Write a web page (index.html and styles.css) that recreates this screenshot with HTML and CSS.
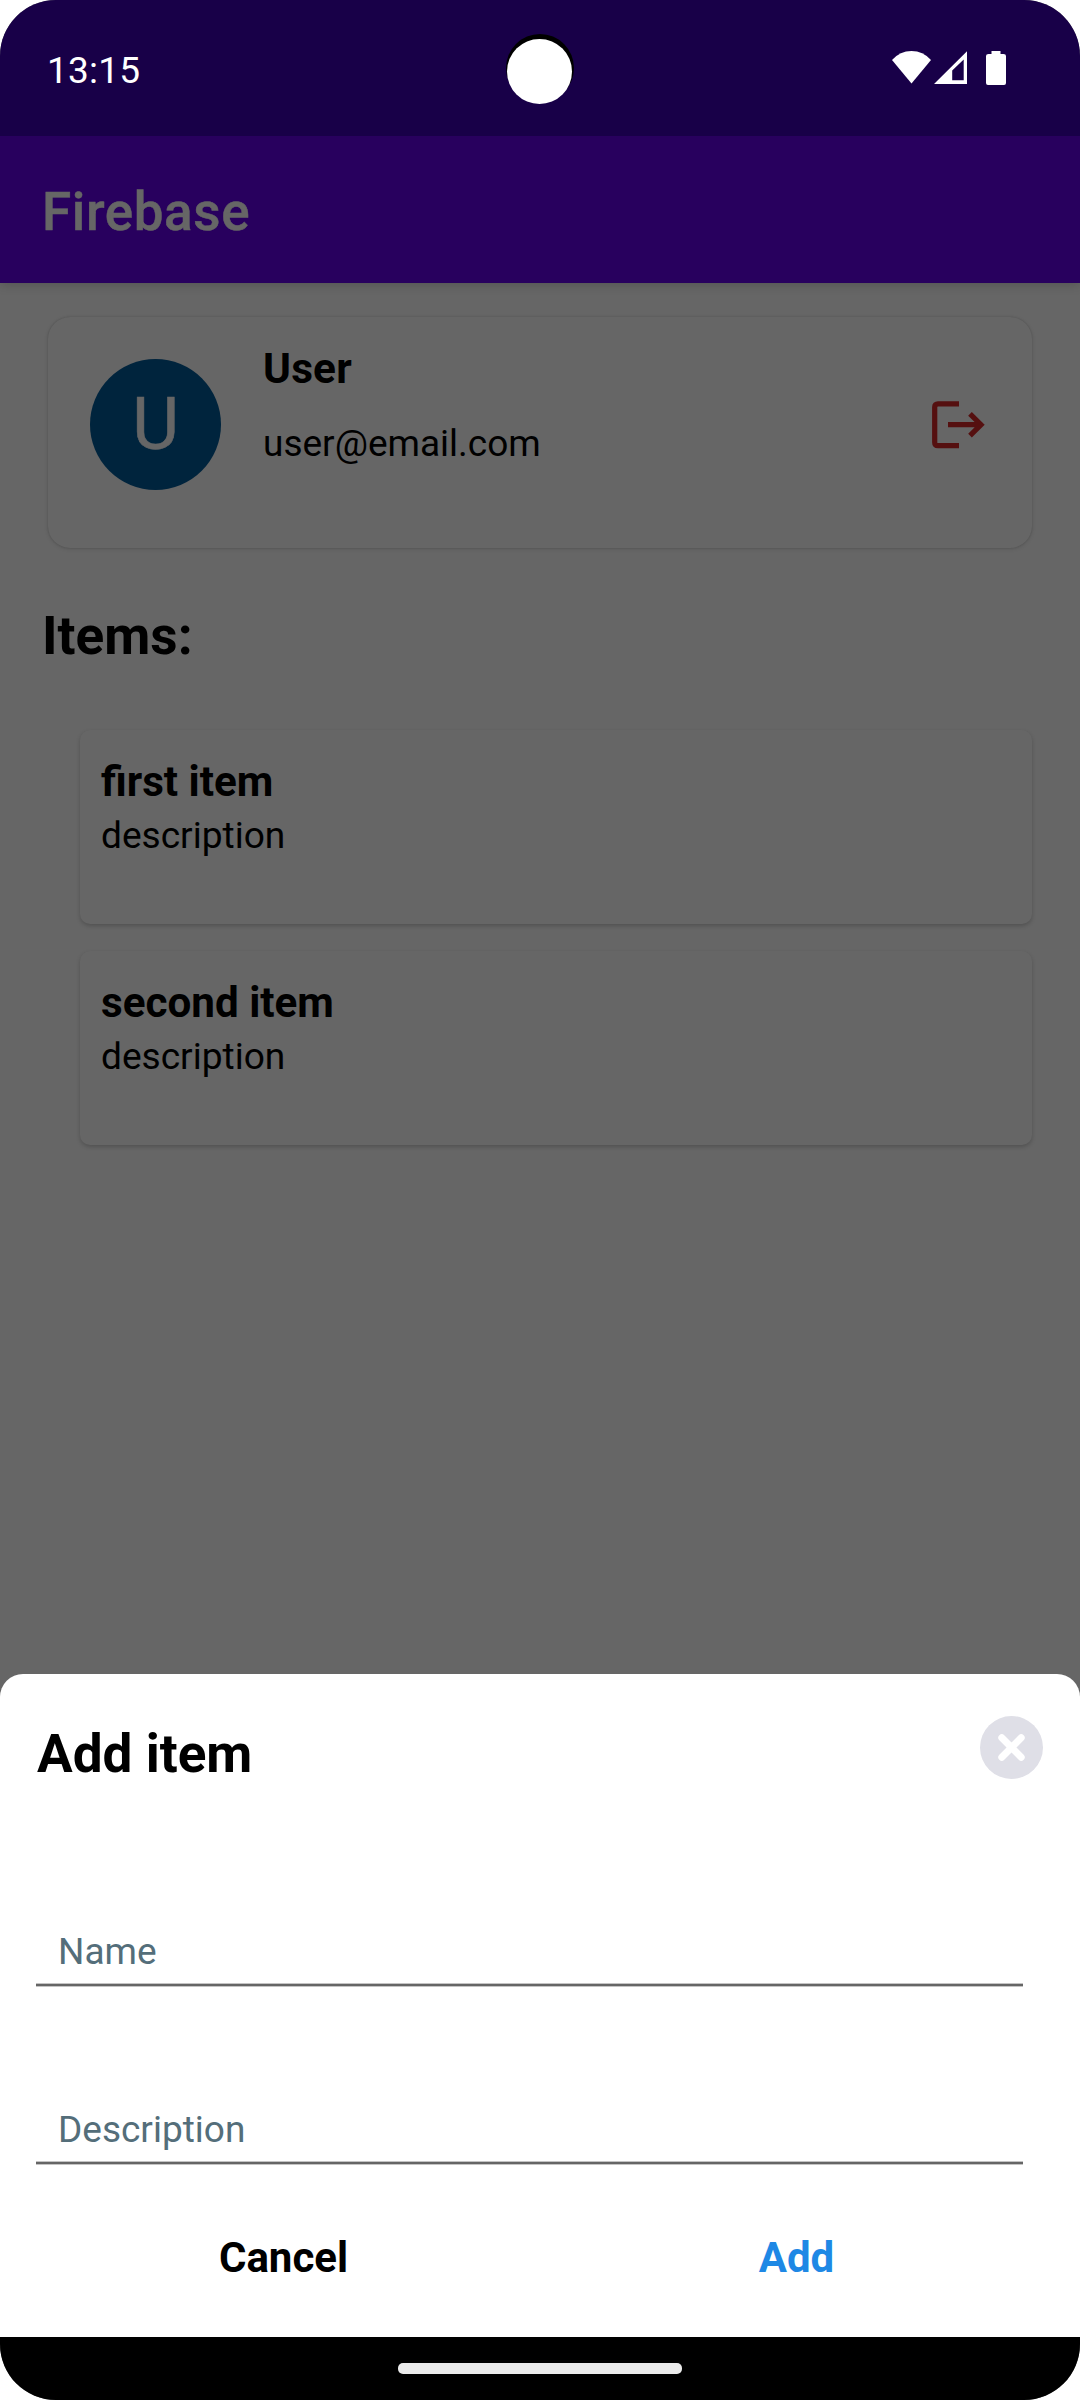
FILE: index.html
```html
<!DOCTYPE html>
<html lang="en">
<head>
<meta charset="utf-8">
<title>Firebase</title>
<link rel="stylesheet" href="styles.css">
</head>
<body>
<div class="screen">
  <header class="status-bar">
    <span class="clock">13:15</span>
    <span class="camera-ring"></span>
    <span class="camera"></span>
    <svg class="status-icons" width="116" height="36" viewBox="0 0 116 36" fill="#fff">
      <path d="M0 10Q8 1 19.500 1Q31 1 39 10L19.500 33.500Z"/>
      <path fill-rule="evenodd" d="M42 34L75 1.300V34ZM60.200 20.500V30.300H71.700V9.500Z"/>
      <path d="M99.500 1H108.500V4H111.500Q114 4 114 6V33Q114 35 112 35H96Q94 35 94 33V6Q94 4 96.500 4H99.500Z"/>
    </svg>
  </header>
  <div class="app-bar"><h1 class="app-title">Firebase</h1></div>
  <main class="content">
    <section class="user-card">
      <div class="avatar">U</div>
      <div class="user-info">
        <div class="user-name">User</div>
        <div class="user-email">user@email.com</div>
      </div>
      <svg class="logout" width="54" height="48" viewBox="0 0 54 48" fill="none" stroke="#551010" stroke-width="5.200">
        <path d="M27 2.800H6Q2.700 2.800 2.700 6V41.500Q2.700 44.700 6 44.700H27"/>
        <path d="M16 23.700H49M38 12.800L49 23.700L38 34.600"/>
      </svg>
    </section>
    <h2 class="items-heading">Items:</h2>
    <div class="item-list">
      <article class="item-card">
        <div class="item-name">first item</div>
        <div class="item-description">description</div>
      </article>
      <article class="item-card">
        <div class="item-name">second item</div>
        <div class="item-description">description</div>
      </article>
    </div>
  </main>
  <section class="sheet">
    <div class="sheet-header">
      <h2 class="sheet-title">Add item</h2>
      <svg class="close" width="63" height="63" viewBox="0 0 63 63">
        <circle cx="31.500" cy="31.500" r="31.500" fill="#dfdfe7"/>
        <path d="M21.800 21.800L41.200 41.200M41.200 21.800L21.800 41.200" stroke="#fff" stroke-width="7" stroke-linecap="round"/>
      </svg>
    </div>
    <div class="field">Name</div>
    <div class="field">Description</div>
    <div class="actions">
      <button class="action" type="button">Cancel</button>
      <button class="action action-primary" type="button">Add</button>
    </div>
  </section>
  <footer class="nav-bar"><span class="nav-pill"></span></footer>
</div>
</body>
</html>
```

FILE: styles.css
```css
* { box-sizing: border-box; }
body { margin: 0; background: #fff; font-family: Roboto, sans-serif; color: #000; }
h1, h2 { margin: 0; }
.screen {
  width: 1080px; height: 2400px;
  display: flex; flex-direction: column;
  border-radius: 56px; overflow: hidden;
  background: #666;
}
.status-bar {
  position: relative; flex: none; height: 136px;
  display: flex; justify-content: space-between; align-items: flex-start;
  padding: 50px 72px 0 47px;
  background: #180048;
}
.clock { color: #fff; font-size: 37px; line-height: 42px; letter-spacing: .2px; }
.camera-ring, .camera { position: absolute; border-radius: 50%; }
.camera-ring { left: 506px; top: 34px; width: 68px; height: 68px; background: #000; }
.camera { left: 507px; top: 39px; width: 65px; height: 65px; background: #fff; }
.app-bar {
  flex: none; height: 147px; padding: 45px 42px 0;
  background: #28005e; box-shadow: 0 2px 10px rgba(0, 0, 0, .18);
}
.app-title {
  color: #666; font-size: 53px; font-weight: 500; line-height: 62px; letter-spacing: .6px;
  -webkit-text-stroke: .5px #666;
}
.content { flex: 1; padding: 34px 48px 0; }
.user-card {
  height: 231px; display: flex; padding: 0 46px 0 42px;
  border-radius: 22px; background: #666;
  box-shadow: 0 0 2px rgba(0, 0, 0, .16), 0 1px 4px rgba(0, 0, 0, .12);
}
.avatar {
  width: 131px; height: 131px; margin-top: 42px;
  border-radius: 50%; background: #00243d; color: #666;
  font-size: 72px; line-height: 132px; text-align: center;
  -webkit-text-stroke: .6px #666;
}
.user-info { flex: 1; padding: 27px 0 0 42px; }
.user-name { font-size: 42.4px; font-weight: 700; line-height: 50px; letter-spacing: .2px; }
.user-email { margin-top: 28px; font-size: 37px; line-height: 44px; }
.logout { margin-top: 84px; }
.items-heading { margin: 57px 0 0 -6px; font-size: 53.2px; line-height: 62px; }
.item-list { display: flex; flex-direction: column; gap: 27px; padding: 63px 0 0 32px; }
.item-card {
  height: 194px; padding: 27px 21px;
  border-radius: 10px; background: #666;
  box-shadow: 0 2px 4px rgba(0, 0, 0, .2);
}
.item-name { font-size: 42.2px; font-weight: 700; line-height: 50px; }
.item-description { margin-top: 7px; font-size: 37.1px; line-height: 44px; }
.sheet {
  flex: none; height: 663px; padding: 42px 37px 0 36px;
  border-radius: 23px 23px 0 0; background: #fff;
}
.sheet-header { display: flex; justify-content: space-between; height: 140px; }
.sheet-title { padding: 7px 0 0 1px; font-size: 53.1px; line-height: 62px; }
.field {
  width: 987px; height: 130px; padding: 74px 22px 0;
  border-bottom: 2px solid #666; box-shadow: 0 1px #c4c4c4, inset 0 -1px #c4c4c4;
  color: #546e7a; font-size: 37px; line-height: 44px;
}
.field + .field { margin-top: 48px; }
.actions { display: flex; width: 1026px; margin: 66px 0 0 -9px; }
.action {
  flex: 1; padding: 0; border: 0; background: none;
  font: 700 42px/56px Roboto, sans-serif; color: #000; text-align: center;
}
.action-primary { color: #1e88e5; }
.nav-bar {
  flex: none; height: 63px; display: flex; justify-content: center; align-items: flex-start;
  padding-top: 26px; background: #000;
}
.nav-pill { width: 284px; height: 11px; border-radius: 5px; background: #ebebeb; }
```
